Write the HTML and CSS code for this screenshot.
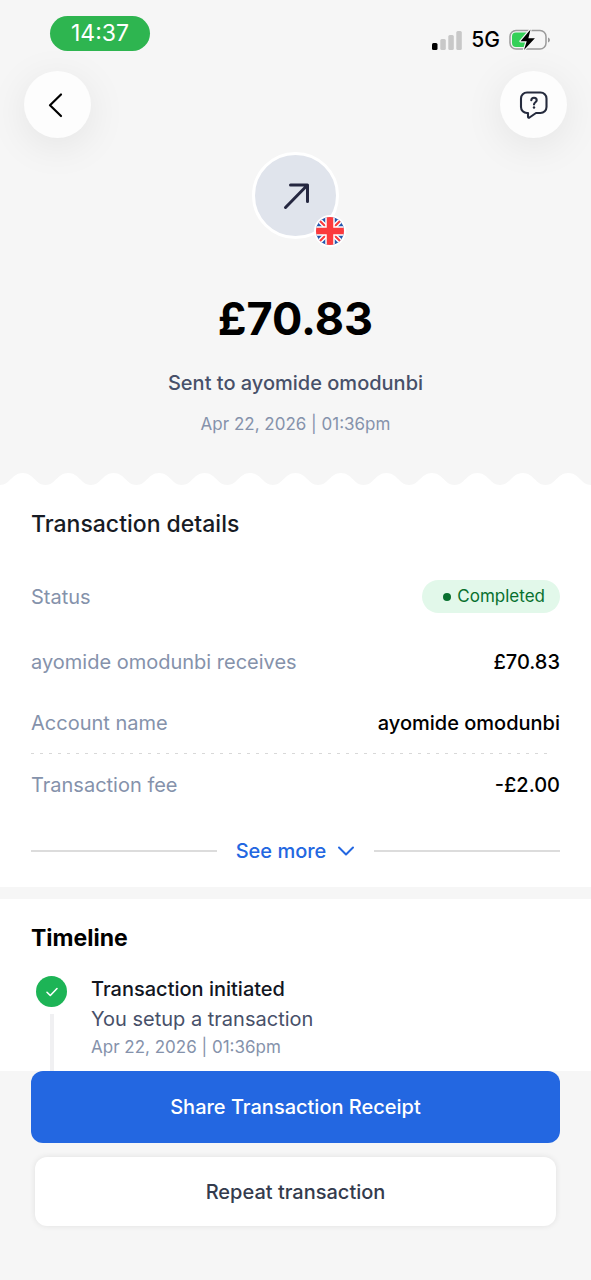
FILE: index.html
```html
<!DOCTYPE html>
<html lang="en">
<head>
<meta charset="utf-8">
<meta name="viewport" content="width=device-width, initial-scale=1">
<title>Transaction details</title>
<link rel="stylesheet" href="styles.css">
</head>
<body>
<div class="status-bar">
  <span class="clock">14:37</span>
  <div class="status-icons">
    <svg width="30" height="19" viewBox="0 0 30 19" aria-hidden="true">
      <rect x="0" y="12" width="5.500" height="7" rx="1.500" fill="#000"/>
      <rect x="8.300" y="8" width="5.500" height="11" rx="1.500" fill="#c8c8c8"/>
      <rect x="16.300" y="4" width="5.500" height="15" rx="1.500" fill="#c8c8c8"/>
      <rect x="24.300" y="0" width="5.500" height="19" rx="1.500" fill="#c8c8c8"/>
    </svg>
    <span class="network">5G</span>
    <svg width="42" height="24" viewBox="0 0 42 24" aria-hidden="true">
      <rect x="1" y="2.500" width="36" height="18.500" rx="6" fill="none" stroke="#9b9b9b" stroke-width="1.500"/>
      <path d="M7 4.500h12v14.500H7a4 4 0 0 1-4-4V8.500a4 4 0 0 1 4-4z" fill="#34d058"/>
      <path d="M39 9.500c2.600 1 2.600 4 0 5z" fill="#9b9b9b"/>
      <path d="M21.500 1.500 11.500 13.200h6.200l-2.700 8.800 10.900-11.800h-6.500z" fill="#000" stroke="#f7f7f7" stroke-width="2.400" paint-order="stroke" stroke-linejoin="round"/>
    </svg>
  </div>
</div>
<header class="toolbar">
  <button class="round-button" type="button" aria-label="Back">
    <svg width="30" height="30" viewBox="0 0 30 30" fill="none" stroke="#000" stroke-width="2.200" stroke-linecap="round" stroke-linejoin="round"><path d="M18 4.500 7 15.300l11 10.700"/></svg>
  </button>
  <button class="round-button" type="button" aria-label="Help">
    <svg width="30" height="30" viewBox="0 0 30 30" fill="none" stroke="#252b3d" stroke-width="2.100" stroke-linecap="round" stroke-linejoin="round"><path d="M8 2.500h13.500a6 6 0 0 1 6 6v8.500a6 6 0 0 1-6 6h-4.500l-6.500 4.500q-1.500.8-1.500-1V23H8a6 6 0 0 1-6-6V8.500a6 6 0 0 1 6-6z"/><path d="M12.300 10.200c.2-3.500 5.400-3.200 5.400 0 0 2.100-2.700 2-2.700 4.300"/><path d="M15 17.500v.1" stroke-width="2.400"/></svg>
  </button>
</header>
<main>
  <section class="summary">
    <div class="avatar">
      <svg width="30" height="30" viewBox="0 0 30 30" fill="none" stroke="#252740" stroke-width="3" stroke-linecap="round" stroke-linejoin="round"><path d="M4.500 26.500 26.500 4M9.500 4h17v16.500"/></svg>
      <svg class="flag" width="32" height="32" viewBox="0 0 32 32" role="img" aria-label="United Kingdom">
        <clipPath id="disc"><circle cx="16" cy="16" r="14"/></clipPath>
        <circle cx="16" cy="16" r="16" fill="#fff"/>
        <g clip-path="url(#disc)">
          <path d="M0 0h32v32H0z" fill="#2456ad"/>
          <path d="M0 0 32 32M32 0 0 32" stroke="#fff" stroke-width="5"/>
          <path d="M0 0 32 32M32 0 0 32" stroke="#fb3a3d" stroke-width="2"/>
          <path d="M16 0v32M0 16h32" stroke="#fff" stroke-width="9.500"/>
          <path d="M16 0v32M0 16h32" stroke="#fb3a3d" stroke-width="6.500"/>
        </g>
      </svg>
    </div>
    <h1 class="amount">£70.83</h1>
    <p class="recipient">Sent to ayomide omodunbi</p>
    <time class="date">Apr 22, 2026 | 01:36pm</time>
  </section>
  <svg class="scallop" viewBox="0 0 1300 12" preserveAspectRatio="none" aria-hidden="true">
    <path fill="#fff" d="M0 12C22 12 26 0 50 0S78 12 100 12S126 0 150 0S178 12 200 12S226 0 250 0S278 12 300 12S326 0 350 0S378 12 400 12S426 0 450 0S478 12 500 12S526 0 550 0S578 12 600 12S626 0 650 0S678 12 700 12S726 0 750 0S778 12 800 12S826 0 850 0S878 12 900 12S926 0 950 0S978 12 1000 12S1026 0 1050 0S1078 12 1100 12S1126 0 1150 0S1178 12 1200 12S1226 0 1250 0S1278 12 1300 12z"/>
  </svg>
  <section class="details">
    <h2 class="details-title">Transaction details</h2>
    <dl class="rows">
      <div class="row"><dt>Status</dt><dd class="badge">Completed</dd></div>
      <div class="row"><dt>ayomide omodunbi receives</dt><dd>£70.83</dd></div>
      <div class="row"><dt>Account name</dt><dd>ayomide omodunbi</dd></div>
      <div class="row row-ruled"><dt>Transaction fee</dt><dd>-£2.00</dd></div>
    </dl>
    <div class="more">
      <button class="more-button" type="button">See more
        <svg width="18" height="12" viewBox="0 0 18 12" fill="none" stroke="#2367e1" stroke-width="2" stroke-linecap="round" stroke-linejoin="round"><path d="M2 2.500 9 9.500l7-7"/></svg>
      </button>
    </div>
  </section>
  <section class="timeline">
    <h2 class="timeline-title">Timeline</h2>
    <div class="event">
      <div class="track">
        <span class="tick"><svg width="14" height="12" viewBox="0 0 14 12" fill="none" stroke="#fff" stroke-width="1.600" stroke-linecap="round" stroke-linejoin="round"><path d="M2 6.300 5.300 9.500 12 2.500"/></svg></span>
        <span class="line"></span>
      </div>
      <div class="event-text">
        <h3 class="event-title">Transaction initiated</h3>
        <p class="event-note">You setup a transaction</p>
        <time class="date">Apr 22, 2026 | 01:36pm</time>
      </div>
    </div>
  </section>
</main>
<footer class="actions">
  <button class="action action-primary" type="button">Share Transaction Receipt</button>
  <button class="action action-secondary" type="button">Repeat transaction</button>
</footer>
</body>
</html>
```
FILE: styles.css
```css
* { box-sizing: border-box; }
body {
  margin: 0;
  min-height: 100vh;
  display: flex;
  flex-direction: column;
  background: #f6f6f6;
  color: #000;
  font-family: Inter, "Liberation Sans", sans-serif;
  font-size: 20px;
  line-height: 28px;
}
h1, h2, h3, p, dl, dd { margin: 0; }
button { font: inherit; border: 0; padding: 0; }
svg { display: block; flex: none; }

.status-bar {
  display: flex;
  justify-content: space-between;
  align-items: flex-start;
  padding: 16px 40px 0 50px;
}
.clock {
  padding: 0 21px;
  border-radius: 18px;
  background: #2eb550;
  color: #fff;
  font-size: 23px;
  line-height: 35px;
}
.status-icons {
  display: flex;
  align-items: center;
  gap: 9px;
  padding-top: 10px;
}
.network { font-size: 21px; font-weight: 500; }

.toolbar {
  display: flex;
  justify-content: space-between;
  padding: 17px 24px 0;
}
.round-button {
  display: grid;
  place-items: center;
  width: 67px;
  height: 67px;
  border-radius: 50%;
  background: #fdfdfd;
  box-shadow: 0 8px 40px rgba(0, 0, 0, .08);
}

.summary {
  display: flex;
  flex-direction: column;
  align-items: center;
  padding: 14px 24px 37px;
}
.avatar {
  position: relative;
  display: grid;
  place-items: center;
  width: 87px;
  height: 87px;
  border: 3px solid #fff;
  border-radius: 50%;
  background: #e0e4ec;
}
.flag { position: absolute; right: -10px; bottom: -11px; }
.amount {
  margin-top: 50px;
  font-size: 45px;
  font-weight: 700;
  line-height: 60px;
}
.recipient {
  margin-top: 20px;
  color: #475069;
  font-weight: 500;
}
.date {
  color: #8592ab;
  font-size: 17px;
  line-height: 24px;
}
.summary .date { margin-top: 15px; }
.scallop { width: 100%; height: 12px; }

.details { padding: 24px 31px 16px; background: #fff; }
.details-title {
  color: #171b24;
  font-size: 23px;
  font-weight: 500;
  line-height: 30px;
}
.rows { margin-top: 23px; }
.row {
  display: flex;
  justify-content: space-between;
  align-items: center;
  min-height: 61px;
}
.row dt { color: #8592ab; }
.row dd { font-weight: 500; }
.row:first-child { min-height: 69px; }
.row-ruled {
  background: repeating-linear-gradient(90deg, #d8d8d8 0 3px, transparent 3px 9px) top left / calc(100% - 7px) 1px no-repeat;
  min-height: 64px;
}
.row .badge {
  display: flex;
  align-items: center;
  gap: 6px;
  padding: 0 15px 0 21px;
  border-radius: 17px;
  background: #e2f8ea;
  color: #08702f;
  font-size: 17px;
  font-weight: 400;
  line-height: 33px;
}
.badge::before {
  content: "";
  width: 8px;
  height: 8px;
  border-radius: 50%;
  background: #08702f;
}
.more {
  display: flex;
  align-items: center;
  gap: 19px;
  margin-top: 14px;
}
.more::before, .more::after {
  content: "";
  flex: 1;
  height: 2px;
  background: #dcdcdc;
}
.more-button {
  display: flex;
  align-items: center;
  gap: 11px;
  min-height: 40px;
  background: none;
  color: #2367e1;
  font-weight: 500;
}

.timeline {
  margin-top: 12px;
  padding: 24px 31px 0;
  background: #fff;
}
.timeline-title { font-size: 23px; font-weight: 700; line-height: 30px; }
.event { display: flex; gap: 24px; padding: 21px 0 0 5px; }
.track {
  display: flex;
  flex-direction: column;
  align-items: center;
  gap: 7px;
  padding-top: 2px;
}
.tick {
  display: grid;
  place-items: center;
  width: 31px;
  height: 31px;
  border-radius: 50%;
  background: #1db456;
}
.line { flex: 1; width: 4px; background: #f0f0f2; }
.event-text { padding-bottom: 12px; }
.event-title { color: #12161f; font-size: 20px; font-weight: 500; line-height: 30px; }
.event-note { color: #475069; line-height: 30px; }
.event .date { display: block; margin-top: 1px; }

.actions {
  display: flex;
  flex-direction: column;
  gap: 14px;
  padding: 0 31px 40px;
}
.action { border-radius: 12px; font-weight: 500; }
.action-primary { min-height: 72px; background: #2367e1; color: #fff; }
.action-secondary {
  min-height: 69px;
  margin: 0 4px;
  background: #fff;
  color: #343b4d;
  box-shadow: 0 0 6px rgba(0, 0, 0, .09);
}
```
